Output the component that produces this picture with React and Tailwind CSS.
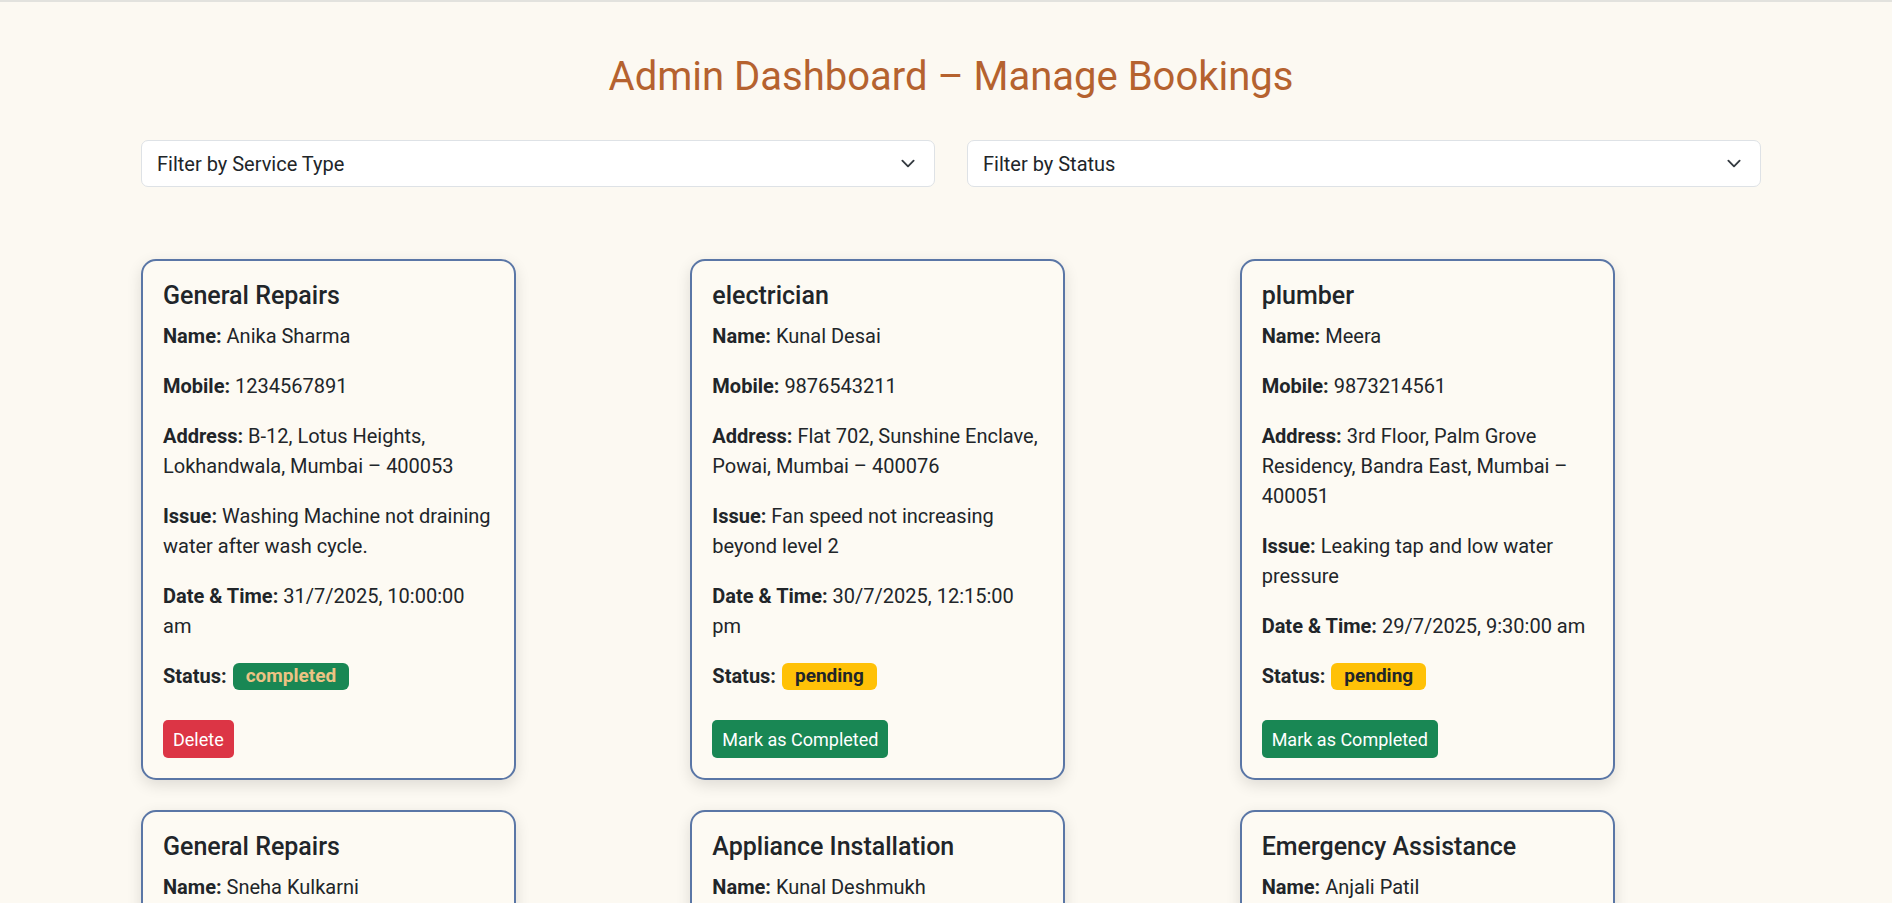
import React from 'react';

const bookings = [
  {
    service: 'General Repairs',
    name: 'Anika Sharma',
    mobile: '1234567891',
    address: 'B-12, Lotus Heights, Lokhandwala, Mumbai – 400053',
    issue: 'Washing Machine not draining water after wash cycle.',
    dateTime: '31/7/2025, 10:00:00 am',
    status: 'completed',
  },
  {
    service: 'electrician',
    name: 'Kunal Desai',
    mobile: '9876543211',
    address: 'Flat 702, Sunshine Enclave, Powai, Mumbai – 400076',
    issue: 'Fan speed not increasing beyond level 2',
    dateTime: '30/7/2025, 12:15:00 pm',
    status: 'pending',
  },
  {
    service: 'plumber',
    name: 'Meera',
    mobile: '9873214561',
    address: '3rd Floor, Palm Grove Residency, Bandra East, Mumbai – 400051',
    issue: 'Leaking tap and low water pressure',
    dateTime: '29/7/2025, 9:30:00 am',
    status: 'pending',
  },
  {
    service: 'General Repairs',
    name: 'Sneha Kulkarni',
    mobile: '9823456710',
    address: 'A-4, Green Park, Kothrud, Pune – 411038',
    issue: 'Door hinge broken and cupboard lock jammed',
    dateTime: '28/7/2025, 11:00:00 am',
    status: 'pending',
  },
  {
    service: 'Appliance Installation',
    name: 'Kunal Deshmukh',
    mobile: '9812345670',
    address: 'Flat 305, Orchid Towers, Andheri West, Mumbai – 400058',
    issue: 'Install new split AC in bedroom',
    dateTime: '27/7/2025, 4:00:00 pm',
    status: 'completed',
  },
  {
    service: 'Emergency Assistance',
    name: 'Anjali Patil',
    mobile: '9898989898',
    address: 'Row House 7, Sai Nagar, Thane – 400601',
    issue: 'Power outage in whole house',
    dateTime: '26/7/2025, 8:45:00 pm',
    status: 'pending',
  },
];

const Chevron = () => (
  <svg width="20" height="15" viewBox="0 0 16 16" fill="none" className="shrink-0">
    <path d="m2 5 6 6 6-6" stroke="#343a40" strokeWidth="2" strokeLinecap="round" strokeLinejoin="round" />
  </svg>
);

const FilterSelect = ({ label }) => (
  <div className="flex h-[47px] items-center justify-between rounded-[7px] border border-[#dee2e6] bg-white pl-[15px] pr-[16px] text-[20px] text-[#212529]">
    <span>{label}</span>
    <Chevron />
  </div>
);

const Field = ({ label, value }) => (
  <p className="mb-[20px] text-[20px] leading-[30px]">
    <strong className="font-bold">{label}:</strong> {value}
  </p>
);

const BookingCard = ({ booking }) => {
  const done = booking.status === 'completed';
  return (
    <div className="w-[375px] rounded-[15px] border-2 border-[#5a76a6] bg-[#fdfaf3] p-[20px] text-[#212529] shadow-[0_5px_15px_rgba(0,0,0,0.12)]">
      <h5 className="mb-[10px] text-[25px] font-medium leading-[30px]">{booking.service}</h5>
      <Field label="Name" value={booking.name} />
      <Field label="Mobile" value={booking.mobile} />
      <Field label="Address" value={booking.address} />
      <Field label="Issue" value={booking.issue} />
      <Field label="Date & Time" value={booking.dateTime} />
      <div className="mb-[29px] flex h-[30px] items-center gap-[6px] text-[20px]">
        <strong className="font-bold">Status:</strong>
        {done ? (
          <span className="flex h-[27px] items-center rounded-[6px] bg-[#198754] px-[13px] text-[19px] font-bold text-[#ecc384]">
            completed
          </span>
        ) : (
          <span className="flex h-[27px] items-center rounded-[6px] bg-[#ffc107] px-[13px] text-[19px] font-bold text-[#212529]">
            pending
          </span>
        )}
      </div>
      {done ? (
        <button className="block h-[38px] rounded-[5px] bg-[#dc3545] px-[10px] text-[18px] text-white">
          Delete
        </button>
      ) : (
        <button className="block h-[38px] rounded-[5px] bg-[#198754] px-[10px] text-[18px] text-white">
          Mark as Completed
        </button>
      )}
    </div>
  );
};

export default function App() {
  return (
    <div
      className="min-h-screen border-t-2 border-[#e2e2de] bg-[#fcf9f2]"
      style={{ fontFamily: 'Roboto, "Noto Sans", sans-serif' }}
    >
      <div className="pl-[141px] pr-[131px] pb-[40px]">
        <h2 className="pt-[51px] text-center text-[40px] font-normal leading-[48px] text-[#b5622f]">
          Admin Dashboard – Manage Bookings
        </h2>

        <div className="mt-[39px] grid grid-cols-2 gap-x-[32px]">
          <FilterSelect label="Filter by Service Type" />
          <FilterSelect label="Filter by Status" />
        </div>

        <div className="mt-[72px] grid grid-cols-3 gap-x-[28px] gap-y-[30px]">
          {bookings.map((b, i) => (
            <BookingCard key={i} booking={b} />
          ))}
        </div>
      </div>
    </div>
  );
}
